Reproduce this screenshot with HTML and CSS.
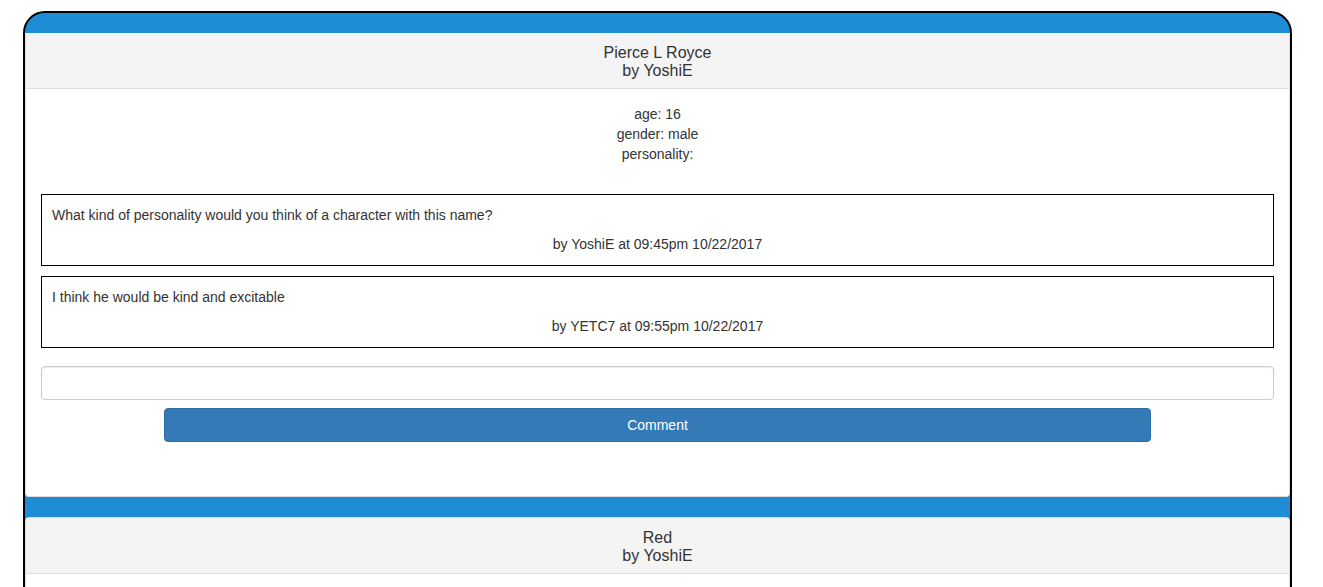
FILE: index.html
```html
<!DOCTYPE html>
<html>
<head>
<meta charset="utf-8">
<title>Characters</title>
<link rel="stylesheet" href="styles.css">
</head>
<body>
<div class="board">
  <div class="panel">
    <div class="panel-heading">
      <h3 class="panel-title">Pierce L Royce<br>by YoshiE</h3>
    </div>
    <div class="panel-body">
      <div class="info">
        <div>age: 16</div>
        <div>gender: male</div>
        <div>personality: </div>
      </div>
      <div class="comment">
        <p class="comment-text">What kind of personality would you think of a character with this name?</p>
        <p class="comment-meta">by YoshiE at 09:45pm 10/22/2017</p>
      </div>
      <div class="comment">
        <p class="comment-text">I think he would be kind and excitable</p>
        <p class="comment-meta">by YETC7 at 09:55pm 10/22/2017</p>
      </div>
      <form class="comment-form">
        <input class="form-control" type="text">
        <button class="btn" type="button">Comment</button>
      </form>
    </div>
  </div>
  <div class="panel">
    <div class="panel-heading">
      <h3 class="panel-title">Red<br>by YoshiE</h3>
    </div>
    <div class="panel-body">
      <div class="info">
        <div>age: </div>
        <div>gender: </div>
        <div>personality: </div>
      </div>
      <form class="comment-form">
        <input class="form-control" type="text">
        <button class="btn" type="button">Comment</button>
      </form>
    </div>
  </div>
</div>
</body>
</html>
```

FILE: styles.css
```css
* { box-sizing: border-box; }

html, body {
  margin: 0;
  padding: 0;
  background: #ffffff;
}

body {
  font-family: "Liberation Sans", Arial, Helvetica, sans-serif;
  font-size: 14px;
  line-height: 1.42857;
  color: #333333;
}

.board {
  width: 1269px;
  margin: 11px 0 0 23px;
  border: 2px solid #000000;
  border-radius: 22px 22px 0 0;
  background: #1f8dd6;
  padding-top: 20px;
  overflow: hidden;
}

.panel {
  background: #ffffff;
  border: 1px solid #dddddd;
  border-radius: 4px;
  margin-bottom: 20px;
}

.panel:first-child {
  border-top: 0;
  border-radius: 0 0 4px 4px;
}

.panel-heading {
  background: #f4f4f4;
  border-bottom: 1px solid #dddddd;
  padding: 11px 15px 9px;
  text-align: center;
}

.panel-title {
  margin: 0;
  font-size: 16px;
  font-weight: normal;
  line-height: 1.1;
  color: #333333;
}

.panel-body {
  padding: 16px 15px 15px;
}

.info {
  text-align: center;
  margin-bottom: 29px;
}

.comment {
  border: 1px solid #000000;
  padding: 11px 10px 10px 10px;
  margin-bottom: 10px;
}

.comment p {
  margin: 0;
}

.comment-text {
  margin-bottom: 9px !important;
}

.comment-meta {
  text-align: center;
}

.comment-form {
  padding-top: 8px;
  padding-bottom: 39px;
}

.form-control {
  display: block;
  width: 100%;
  height: 34px;
  padding: 6px 12px;
  font-family: inherit;
  font-size: 14px;
  color: #555555;
  background: #ffffff;
  border: 1px solid #cccccc;
  border-radius: 4px;
  box-shadow: inset 0 1px 1px rgba(0,0,0,0.075);
  margin: 0;
}

.btn {
  display: block;
  width: 80%;
  height: 34px;
  margin: 8px auto 0;
  padding: 7px 12px 5px;
  font-family: inherit;
  font-size: 14px;
  line-height: 1.42857;
  color: #ffffff;
  background: #337ab7;
  border: 1px solid #2e6da4;
  border-radius: 4px;
  cursor: pointer;
}
```
